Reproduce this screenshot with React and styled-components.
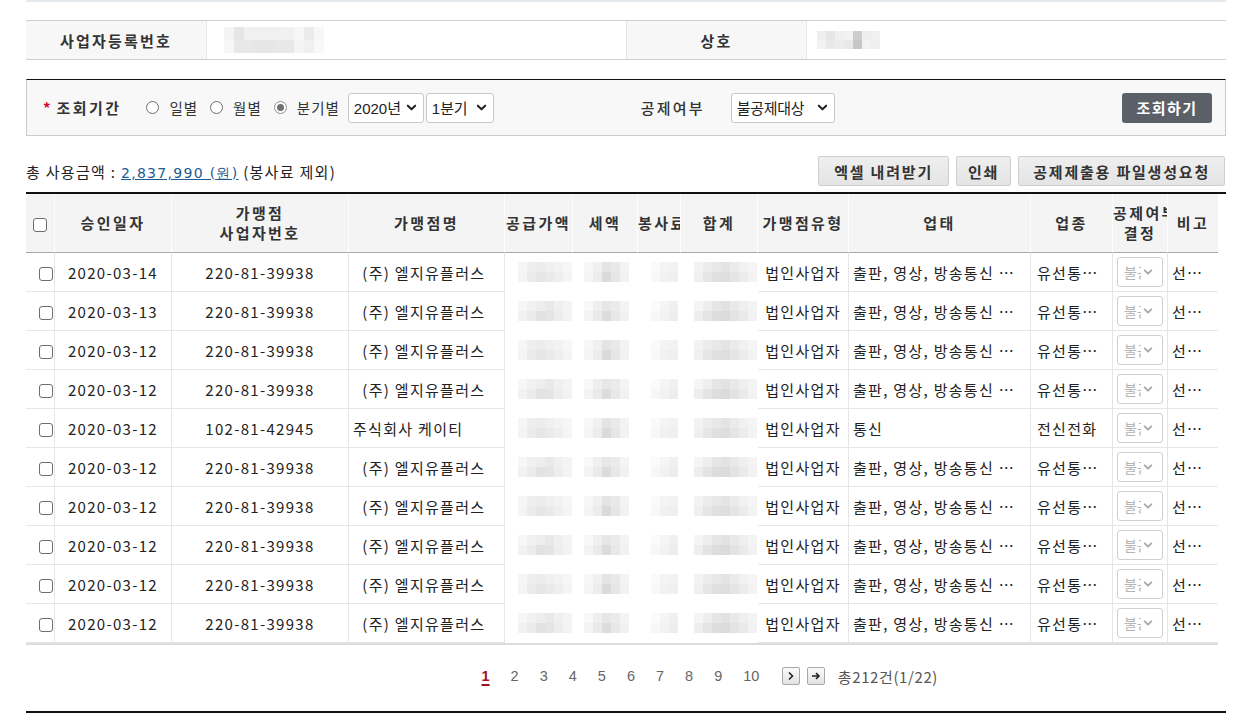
import React from "react";
import styled, { createGlobalStyle } from "styled-components";

const GlobalStyle = createGlobalStyle`
  html, body { margin: 0; padding: 0; background: #fff; }
  body {
    font-family: "Noto Sans CJK KR", "Noto Sans", sans-serif;
    color: #333;
  }
  * { box-sizing: border-box; }
`;

const Page = styled.div`
  width: 1200px;
  margin-left: 26px;
`;

const TopRule = styled.div`
  height: 2px;
  background: #e4e9ee;
`;

/* ---------- info table ---------- */
const InfoGrid = styled.div`
  margin-top: 18px;
  display: grid;
  grid-template-columns: 181px 420px 180px 1fr;
  height: 40px;
  border-top: 1px solid #cfcfcf;
  border-bottom: 1px solid #cfcfcf;
`;
const InfoLabel = styled.div`
  display: flex;
  align-items: center;
  justify-content: center;
  background: #f7f7f7;
  font-size: 15px;
  font-weight: 700;
  letter-spacing: 2.2px;
  color: #333;
  border-right: 1px solid #e6e6e6;
`;
const InfoValue = styled.div`
  display: flex;
  align-items: center;
  padding-left: ${(p) => p.$pad}px;
  border-right: ${(p) => (p.$last ? "none" : "1px solid #e6e6e6")};
`;

/* ---------- mosaic (blurred data) ---------- */
const MosaicGrid = styled.div`
  display: inline-grid;
  grid-auto-flow: row;
  grid-template-columns: repeat(${(p) => p.$cols}, ${(p) => p.$tw}px);
  grid-auto-rows: ${(p) => p.$th}px;
`;
const Tile = styled.span`
  background: ${(p) => p.$c};
`;
function Mosaic({ rows, tw, th }) {
  return (
    <MosaicGrid $cols={rows[0].length} $tw={tw} $th={th}>
      {rows.flat().map((c, i) => (
        <Tile key={i} $c={c} />
      ))}
    </MosaicGrid>
  );
}

/* ---------- search box ---------- */
const SearchBox = styled.div`
  margin-top: 19px;
  height: 57px;
  display: flex;
  align-items: center;
  background: #f8f8f8;
  border: 1px solid #cccccc;
  border-top: 1px solid #111;
  padding: 0 13px 0 16px;
`;
const Required = styled.span`
  color: #c8102e;
  font-size: 15px;
  font-weight: 700;
  margin-right: 6px;
  line-height: 1;
`;
const FieldLabel = styled.span`
  font-size: 15px;
  font-weight: ${(p) => (p.$bold ? 700 : 500)};
  letter-spacing: ${(p) => (p.$bold ? "2.4px" : "2.2px")};
  color: #333;
  margin-right: ${(p) => p.$mr}px;
`;
const RadioGroup = styled.div`
  display: flex;
  align-items: center;
  gap: 12px;
`;
const RadioItem = styled.label`
  display: flex;
  align-items: center;
  gap: 10px;
  font-size: 14.5px;
  color: #333;
  letter-spacing: 1px;
`;
const RadioDot = styled.span`
  width: 13px;
  height: 13px;
  border-radius: 50%;
  border: 1px solid ${(p) => (p.$on ? "#8f8f8f" : "#6f6f6f")};
  background: #fff;
  display: flex;
  align-items: center;
  justify-content: center;
  &::after {
    content: "";
    width: 7px;
    height: 7px;
    border-radius: 50%;
    background: ${(p) => (p.$on ? "#707070" : "transparent")};
  }
`;
const Selects = styled.div`
  display: flex;
  gap: 2px;
  margin-left: 8px;
`;
const SelectBox = styled.div`
  height: 30px;
  width: ${(p) => p.$w}px;
  display: flex;
  align-items: center;
  justify-content: space-between;
  padding: 0 6px 0 5px;
  background: #fff;
  border: 1px solid #c9c9c9;
  border-radius: 3px;
  font-family: "Liberation Sans", "Noto Sans CJK KR", sans-serif;
  font-size: 15px;
  color: #222;
`;
const SelectText = styled.span`
  font-family: "Noto Sans CJK KR", sans-serif;
  letter-spacing: -0.3px;
`;
const Chevron = ({ color = "#222", size = 11 }) => (
  <svg width={size} height={size} viewBox="0 0 12 12">
    <path d="M2 4 L6 8 L10 4" fill="none" stroke={color} strokeWidth="2.2" strokeLinecap="round" strokeLinejoin="round" />
  </svg>
);
const DeductGroup = styled.div`
  display: flex;
  align-items: center;
  margin-left: 147px;
`;
const Spacer = styled.div`
  flex: 1;
`;
const DarkButton = styled.button`
  height: 30px;
  width: 90px;
  border: none;
  border-radius: 3px;
  background: #5b6068;
  color: #fff;
  font-family: "Noto Sans CJK KR", sans-serif;
  font-size: 15px;
  font-weight: 700;
  letter-spacing: 1.5px;
`;

/* ---------- totals bar ---------- */
const TotalsBar = styled.div`
  margin-top: 20px;
  display: flex;
  align-items: center;
  justify-content: space-between;
  padding-right: 1px;
`;
const TotalText = styled.div`
  font-size: 15px;
  color: #222;
  letter-spacing: 1.3px;
  padding-top: 1px;
`;
const AmountLink = styled.a`
  color: #1d5b94;
  text-decoration: underline;
  font-family: "DejaVu Sans", sans-serif;
  font-size: 14px;
  letter-spacing: 1.3px;
`;
const ActionRow = styled.div`
  display: flex;
  gap: 7px;
`;
const GrayButton = styled.button`
  height: 30px;
  padding: 0 ${(p) => p.$px}px;
  border: 1px solid #cfcfcf;
  border-radius: 2px;
  background: linear-gradient(#efefef, #e4e4e4);
  color: #333;
  font-family: "Noto Sans CJK KR", sans-serif;
  font-size: 15px;
  font-weight: 700;
  letter-spacing: 1.8px;
`;

/* ---------- data table ---------- */
const TableWrap = styled.div`
  margin-top: 6px;
  border-top: 2px solid #111;
`;
const Table = styled.table`
  width: 1192px;
  table-layout: fixed;
  border-collapse: separate;
  border-spacing: 0;
`;
const Th = styled.th`
  height: 59px;
  padding: 0;
  background: #f4f4f4;
  border-right: 1px solid #fdfdfd;
  border-bottom: 1px solid #a9a9a9;
  font-size: 15px;
  font-weight: 700;
  letter-spacing: 2.4px;
  line-height: 20px;
  color: #333;
  text-align: center;
  white-space: nowrap;
  overflow: hidden;
  &:last-child { border-right: none; }
`;
const Td = styled.td`
  height: 39px;
  padding: 0 ${(p) => p.$pad || 0}px;
  border-bottom: 1px solid ${(p) => (p.$blur ? "transparent" : "#e6e6e6")};
  border-right: 1px solid ${(p) => (p.$blur ? "transparent" : "#e6e6e6")};
  font-size: 15px;
  color: #222;
  text-align: ${(p) => p.$align || "center"};
  letter-spacing: 1.3px;
  white-space: pre;
  overflow: hidden;
  text-overflow: ellipsis;
  &:last-child { border-right: none; }
`;
const MosaicCell = styled.div`
  display: flex;
  justify-content: flex-end;
  padding-right: ${(p) => p.$pr || 0}px;
`;
const CheckBox = styled.span`
  display: inline-block;
  width: 14px;
  height: 14px;
  border: 1px solid #6e6e6e;
  border-radius: 3px;
  background: #fff;
  vertical-align: middle;
`;
const MiniSelect = styled.div`
  width: 46px;
  height: 30px;
  display: flex;
  align-items: center;
  gap: 2px;
  padding: 0 5px 0 6px;
  border: 1px solid #cfcfcf;
  border-radius: 3px;
  background: #fff;
  color: #b5b5b5;
  font-size: 14px;
  letter-spacing: 0;
`;
const MiniText = styled.span`
  width: 17px;
  overflow: hidden;
  white-space: nowrap;
`;
const TableFoot = styled.div`
  height: 2px;
  width: 1192px;
  background: #dcdcdc;
`;

/* ---------- pagination ---------- */
const Pager = styled.div`
  margin-top: 21px;
  display: flex;
  align-items: center;
  padding-left: 445px;
  height: 20px;
`;
const PageNum = styled.a`
  padding: 0 10.5px;
  font-family: "Liberation Sans", sans-serif;
  font-size: 14.5px;
  color: ${(p) => (p.$on ? "#a3121f" : "#666")};
  font-weight: ${(p) => (p.$on ? 700 : 400)};
  text-decoration: ${(p) => (p.$on ? "underline" : "none")};
  text-underline-offset: 3px;
  text-decoration-thickness: 2px;
`;
const ArrowBtn = styled.span`
  width: 18px;
  height: 18px;
  margin-left: ${(p) => p.$ml}px;
  display: flex;
  align-items: center;
  justify-content: center;
  border: 1px solid #a8a8a8;
  border-radius: 2px;
  background: linear-gradient(#fafafa, #e2e2e2);
`;
const PagerTotal = styled.span`
  margin-left: 13px;
  font-size: 15px;
  color: #555;
  letter-spacing: 0.6px;
`;
const BottomRule = styled.div`
  margin-top: 25px;
  height: 2px;
  background: #111;
`;

/* ---------- data ---------- */
const LG = {
  biz: "220-81-39938",
  name: "  (주) 엘지유플러스",
  type: "법인사업자",
  cond: "출판, 영상, 방송통신 및 정보서비스업",
  kind: "유선통신업",
};
const KT = {
  biz: "102-81-42945",
  name: "주식회사 케이티",
  type: "법인사업자",
  cond: "통신",
  kind: "전신전화",
};
const rows = [
  { date: "2020-03-14", ...LG },
  { date: "2020-03-13", ...LG },
  { date: "2020-03-12", ...LG },
  { date: "2020-03-12", ...LG },
  { date: "2020-03-12", ...KT },
  { date: "2020-03-12", ...LG },
  { date: "2020-03-12", ...LG },
  { date: "2020-03-12", ...LG },
  { date: "2020-03-12", ...LG },
  { date: "2020-03-12", ...LG },
];

const cols = [29, 117, 177, 156, 68, 65, 43, 77, 91, 182, 82, 55, 50];

const blurSets = {
  supply: [
    [
      ["#f6f6f6", "#eeeeee", "#ececec", "#f0f0f0", "#f3f3f3", "#f7f7f7"],
      ["#f4f4f4", "#ebebeb", "#e6e6e6", "#eaeaea", "#efefef", "#f5f5f5"],
    ],
    [
      ["#f7f7f7", "#f1f1f1", "#eeeeee", "#e9e9e9", "#f0f0f0", "#f4f4f4"],
      ["#f2f2f2", "#ebebeb", "#e2e2e2", "#e5e5e5", "#ededed", "#f3f3f3"],
    ],
  ],
  tax: [
    [
      ["#f7f7f7", "#f0f0f0", "#e4e4e4", "#e9e9e9", "#f3f3f3"],
      ["#f5f5f5", "#ececec", "#dadada", "#e6e6e6", "#f2f2f2"],
    ],
    [
      ["#f8f8f8", "#efefef", "#e7e7e7", "#ebebeb", "#f4f4f4"],
      ["#f3f3f3", "#eaeaea", "#dcdcdc", "#e8e8e8", "#f1f1f1"],
    ],
  ],
  svc: [
    [
      ["#fafafa", "#f4f4f4", "#f2f2f2"],
      ["#f8f8f8", "#f1f1f1", "#efefef"],
    ],
    [
      ["#fbfbfb", "#f5f5f5", "#f0f0f0"],
      ["#f7f7f7", "#f2f2f2", "#ededed"],
    ],
  ],
  sum: [
    [
      ["#f3f3f3", "#ececec", "#e8e8e8", "#e4e4e4", "#ebebeb", "#f1f1f1", "#f5f5f5"],
      ["#f0f0f0", "#e6e6e6", "#e0e0e0", "#dedede", "#e5e5e5", "#ececec", "#f3f3f3"],
    ],
    [
      ["#f5f5f5", "#eeeeee", "#e6e6e6", "#e2e2e2", "#e9e9e9", "#efefef", "#f4f4f4"],
      ["#eeeeee", "#e4e4e4", "#dddddd", "#dbdbdb", "#e3e3e3", "#eaeaea", "#f2f2f2"],
    ],
  ],
};

const info1 = [
  ["#f3f3f3", "#e6e6e6", "#f0f0f0", "#f0f0f0", "#f0f0f0", "#f0f0f0", "#f1f1f1", "#f7f7f7", "#ebebeb", "#f7f7f7"],
  ["#f6f6f6", "#e8e8e8", "#e8e8e8", "#e6e6e6", "#e6e6e6", "#e8e8e8", "#e8e8e8", "#f4f4f4", "#f0f0f0", "#f8f8f8"],
];
const info2 = [
  ["#eeeeee", "#e6e6e6", "#efefef", "#f2f2f2", "#cdcdcd", "#eeeeee", "#f0f0f0"],
  ["#f2f2f2", "#e9e9e9", "#ececec", "#e8e8e8", "#c6c6c6", "#f2f2f2", "#efefef"],
];

function NextIcon() {
  return (
    <svg width="10" height="10" viewBox="0 0 10 10">
      <path d="M3 1.5 L6.5 5 L3 8.5" fill="none" stroke="#222" strokeWidth="1.6" />
    </svg>
  );
}
function LastIcon() {
  return (
    <svg width="10" height="10" viewBox="0 0 10 10">
      <path d="M1 5 H8 M5 2 L8 5 L5 8" fill="none" stroke="#222" strokeWidth="1.6" />
    </svg>
  );
}

export default function App() {
  return (
    <>
      <GlobalStyle />
      <Page>
        <TopRule />
        <InfoGrid>
          <InfoLabel>사업자등록번호</InfoLabel>
          <InfoValue $pad={17}>
            <Mosaic rows={info1} tw={10} th={13} />
          </InfoValue>
          <InfoLabel>상호</InfoLabel>
          <InfoValue $pad={10} $last>
            <Mosaic rows={info2} tw={9} th={9} />
          </InfoValue>
        </InfoGrid>

        <SearchBox>
          <Required>*</Required>
          <FieldLabel $bold $mr={25}>조회기간</FieldLabel>
          <RadioGroup>
            <RadioItem><RadioDot />일별</RadioItem>
            <RadioItem><RadioDot />월별</RadioItem>
            <RadioItem><RadioDot $on />분기별</RadioItem>
          </RadioGroup>
          <Selects>
            <SelectBox $w={76}>
              <span>2020<SelectText>년</SelectText></span>
              <Chevron />
            </SelectBox>
            <SelectBox $w={68}>
              <span>1<SelectText>분기</SelectText></span>
              <Chevron />
            </SelectBox>
          </Selects>
          <DeductGroup>
            <FieldLabel $mr={26}>공제여부</FieldLabel>
            <SelectBox $w={104}>
              <SelectText>불공제대상</SelectText>
              <Chevron />
            </SelectBox>
          </DeductGroup>
          <Spacer />
          <DarkButton>조회하기</DarkButton>
        </SearchBox>

        <TotalsBar>
          <TotalText>
            총 사용금액 : <AmountLink>2,837,990 (원)</AmountLink> (봉사료 제외)
          </TotalText>
          <ActionRow>
            <GrayButton $px={15}>엑셀 내려받기</GrayButton>
            <GrayButton $px={11}>인쇄</GrayButton>
            <GrayButton $px={14}>공제제출용 파일생성요청</GrayButton>
          </ActionRow>
        </TotalsBar>

        <TableWrap>
          <Table>
            <colgroup>
              {cols.map((w, i) => (
                <col key={i} style={{ width: w }} />
              ))}
            </colgroup>
            <thead>
              <tr>
                <Th><CheckBox /></Th>
                <Th>승인일자</Th>
                <Th>가맹점<br />사업자번호</Th>
                <Th>가맹점명</Th>
                <Th>공급가액</Th>
                <Th>세액</Th>
                <Th>봉사료</Th>
                <Th>합계</Th>
                <Th>가맹점유형</Th>
                <Th>업태</Th>
                <Th>업종</Th>
                <Th>공제여부<br />결정</Th>
                <Th>비고</Th>
              </tr>
            </thead>
            <tbody>
              {rows.map((r, i) => {
                const v = i % 2;
                return (
                  <tr key={i}>
                    <Td $align="left" $pad={13}><CheckBox /></Td>
                    <Td>{r.date}</Td>
                    <Td>{r.biz}</Td>
                    <Td $align="left" $pad={4}>{r.name}</Td>
                    <Td $blur>
                      <MosaicCell><Mosaic rows={blurSets.supply[v]} tw={9} th={10} /></MosaicCell>
                    </Td>
                    <Td $blur>
                      <MosaicCell $pr={8}><Mosaic rows={blurSets.tax[v]} tw={9} th={10} /></MosaicCell>
                    </Td>
                    <Td $blur>
                      <MosaicCell $pr={2}><Mosaic rows={blurSets.svc[v]} tw={9} th={10} /></MosaicCell>
                    </Td>
                    <Td $blur>
                      <MosaicCell><Mosaic rows={blurSets.sum[v]} tw={9} th={10} /></MosaicCell>
                    </Td>
                    <Td>{r.type}</Td>
                    <Td $align="left" $pad={4}>{r.cond}</Td>
                    <Td $align="left" $pad={6}>{r.kind}</Td>
                    <Td $pad={4}>
                      <MiniSelect>
                        <MiniText>불공제</MiniText>
                        <Chevron color="#a9a9a9" size={10} />
                      </MiniSelect>
                    </Td>
                    <Td $align="left" $pad={4}>선택사항</Td>
                  </tr>
                );
              })}
            </tbody>
          </Table>
          <TableFoot />
        </TableWrap>

        <Pager>
          {["1", "2", "3", "4", "5", "6", "7", "8", "9", "10"].map((n) => (
            <PageNum key={n} $on={n === "1"}>{n}</PageNum>
          ))}
          <ArrowBtn $ml={12}><NextIcon /></ArrowBtn>
          <ArrowBtn $ml={7}><LastIcon /></ArrowBtn>
          <PagerTotal>총212건(1/22)</PagerTotal>
        </Pager>
        <BottomRule />
      </Page>
    </>
  );
}
